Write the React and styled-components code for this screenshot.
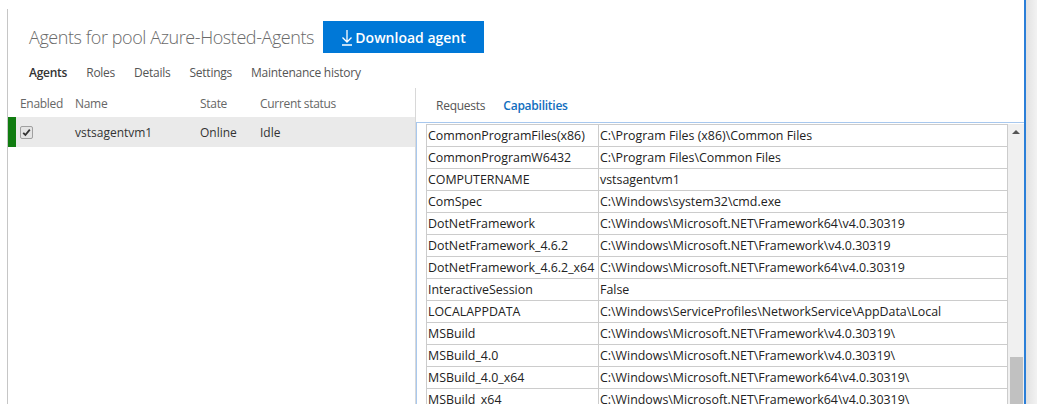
import React from "react";
import styled, { createGlobalStyle } from "styled-components";

const GlobalStyle = createGlobalStyle`
  html, body {
    margin: 0;
    padding: 0;
    background: #ffffff;
  }
  body {
    font-family: "Open Sans", "Noto Sans", sans-serif;
    color: #222;
  }
`;

const capabilities = [
  ["CommonProgramFiles(x86)", "C:\\Program Files (x86)\\Common Files"],
  ["CommonProgramW6432", "C:\\Program Files\\Common Files"],
  ["COMPUTERNAME", "vstsagentvm1"],
  ["ComSpec", "C:\\Windows\\system32\\cmd.exe"],
  ["DotNetFramework", "C:\\Windows\\Microsoft.NET\\Framework64\\v4.0.30319"],
  ["DotNetFramework_4.6.2", "C:\\Windows\\Microsoft.NET\\Framework\\v4.0.30319"],
  ["DotNetFramework_4.6.2_x64", "C:\\Windows\\Microsoft.NET\\Framework64\\v4.0.30319"],
  ["InteractiveSession", "False"],
  ["LOCALAPPDATA", "C:\\Windows\\ServiceProfiles\\NetworkService\\AppData\\Local"],
  ["MSBuild", "C:\\Windows\\Microsoft.NET\\Framework\\v4.0.30319\\"],
  ["MSBuild_4.0", "C:\\Windows\\Microsoft.NET\\Framework\\v4.0.30319\\"],
  ["MSBuild_4.0_x64", "C:\\Windows\\Microsoft.NET\\Framework64\\v4.0.30319\\"],
  ["MSBuild_x64", "C:\\Windows\\Microsoft.NET\\Framework64\\v4.0.30319\\"],
];

const Shell = styled.div`
  display: flex;
  width: 1037px;
  height: 404px;
  overflow: hidden;
`;

/* left margin of the page; the dialog's grey edge starts a little below the top */
const Gutter = styled.div`
  width: 8px;
  flex: none;
  background: linear-gradient(to right, transparent 7px, #c6c6c6 7px) no-repeat 0 9px;
`;

const Dialog = styled.div`
  flex: 1;
  display: flex;
  flex-direction: column;
  border-right: 2px solid #2b7fd8;
  min-width: 0;
`;

const Shadow = styled.div`
  width: 11px;
  flex: none;
  background: linear-gradient(to right, #e2e2e2, #f2f2f2);
`;

const Header = styled.div`
  display: flex;
  align-items: center;
  gap: 9px;
  padding: 21px 0 0 21px;
`;

const Title = styled.h1`
  margin: 0;
  font-family: "Open Sans", sans-serif;
  font-weight: 300;
  font-size: 18px;
  color: #6a6a6a;
  letter-spacing: -0.42px;
`;

const PrimaryButton = styled.button`
  display: flex;
  align-items: center;
  justify-content: center;
  gap: 2px;
  width: 161px;
  height: 32px;
  border: none;
  background: #0078d7;
  color: #ffffff;
  font-family: "Open Sans", sans-serif;
  font-weight: 600;
  font-size: 14px;
  padding: 0;
`;

const Tabs = styled.div`
  display: flex;
  align-items: center;
  gap: ${(p) => p.gap}px;
  height: ${(p) => p.h}px;
  padding: ${(p) => p.pad};
`;

const Tab = styled.span`
  font-size: 12px;
  letter-spacing: -0.25px;
  font-weight: ${(p) => (p.active ? 600 : 400)};
  color: ${(p) => (p.blue ? "#106ebe" : p.active ? "#333" : "#555")};
`;

const Split = styled.div`
  flex: 1;
  display: flex;
  min-height: 0;
`;

const LeftPane = styled.div`
  width: 407px;
  flex: none;
  border-right: 1px solid #d8d8d8;
`;

const GridRow = styled.div`
  display: grid;
  grid-template-columns: 8px 59px 125px 60px 1fr;
  align-items: center;
  height: ${(p) => p.h}px;
  padding-top: ${(p) => (p.head ? 1 : 0)}px;
  box-sizing: border-box;
  background: ${(p) => (p.selected ? "#eaeaea" : "transparent")};
  font-size: 12px;
  letter-spacing: ${(p) => (p.head ? "-0.3px" : "0")};
  color: ${(p) => (p.head ? "#666" : "#333")};
`;

const StatusBar = styled.div`
  align-self: stretch;
  background: ${(p) => p.color || "transparent"};
`;

const Cell = styled.span`
  padding-left: ${(p) => p.indent || 0}px;
  white-space: nowrap;
`;

const CheckBox = styled.span`
  display: inline-flex;
  align-items: center;
  justify-content: center;
  margin-left: 4px;
  width: 11px;
  height: 11px;
  border: 1px solid #a0a0a0;
  border-radius: 2px;
  background: #e4e4e4;
`;

const RightPane = styled.div`
  flex: 1;
  display: flex;
  flex-direction: column;
  min-width: 0;
`;

const TableBox = styled.div`
  flex: 1;
  display: flex;
  border-top: 1px solid #a8c8ee;
  border-left: 1px solid #a8c8ee;
  padding: 1px 0 0 9px;
  min-height: 0;
  overflow: hidden;
`;

const Table = styled.table`
  flex: 1;
  border-collapse: collapse;
  align-self: flex-start;
  font-size: 12.4px;
  color: #222;
`;

const Td = styled.td`
  height: 21px;
  padding: 0 0 0 1px;
  border: 1px solid #cccccc;
  width: ${(p) => p.w || "auto"};
  white-space: nowrap;
`;

const Scrollbar = styled.div`
  width: 16px;
  flex: none;
  display: flex;
  flex-direction: column;
  align-items: center;
  background: #f0f0f0;
`;

const Arrow = styled.div`
  margin-top: 6px;
  width: 0;
  height: 0;
  border-left: 4px solid transparent;
  border-right: 4px solid transparent;
  border-bottom: 4px solid #555;
`;

const Thumb = styled.div`
  margin-top: ${(p) => p.offset}px;
  width: 13px;
  flex: 1;
  background: #c1c1c1;
`;

const DownloadIcon = () => (
  <svg width="12" height="17" viewBox="0 0 12 17" fill="none" stroke="#fff" strokeWidth="1.3">
    <path d="M6 1v12M1.5 8.5L6 13l4.5-4.5M1 16h10" />
  </svg>
);

const CheckMark = () => (
  <svg width="9" height="9" viewBox="0 0 9 9" fill="none" stroke="#333" strokeWidth="1.8">
    <path d="M1.2 4.8l2.2 2.2 4.4-5.4" />
  </svg>
);

export default function App() {
  return (
    <Shell>
      <GlobalStyle />
      <Gutter />
      <Dialog>
        <Header>
          <Title>Agents for pool Azure-Hosted-Agents</Title>
          <PrimaryButton>
            <DownloadIcon />
            Download agent
          </PrimaryButton>
        </Header>
        <Tabs gap={19} h={32} pad="3px 0 0 21px">
          <Tab active>Agents</Tab>
          <Tab>Roles</Tab>
          <Tab>Details</Tab>
          <Tab>Settings</Tab>
          <Tab>Maintenance history</Tab>
        </Tabs>
        <Split>
          <LeftPane>
            <GridRow head h={29}>
              <StatusBar />
              <Cell indent={4}>Enabled</Cell>
              <Cell>Name</Cell>
              <Cell>State</Cell>
              <Cell>Current status</Cell>
            </GridRow>
            <GridRow selected h={30}>
              <StatusBar color="#107c10" />
              <Cell>
                <CheckBox>
                  <CheckMark />
                </CheckBox>
              </Cell>
              <Cell>vstsagentvm1</Cell>
              <Cell>Online</Cell>
              <Cell>Idle</Cell>
            </GridRow>
          </LeftPane>
          <RightPane>
            <Tabs gap={18} h={34} pad="0 0 0 20px">
              <Tab>Requests</Tab>
              <Tab active blue>Capabilities</Tab>
            </Tabs>
            <TableBox>
              <Table>
                <tbody>
                  {capabilities.map(([name, value]) => (
                    <tr key={name}>
                      <Td w="170px">{name}</Td>
                      <Td>{value}</Td>
                    </tr>
                  ))}
                </tbody>
              </Table>
              <Scrollbar>
                <Arrow />
                <Thumb offset={223} />
              </Scrollbar>
            </TableBox>
          </RightPane>
        </Split>
      </Dialog>
      <Shadow />
    </Shell>
  );
}
